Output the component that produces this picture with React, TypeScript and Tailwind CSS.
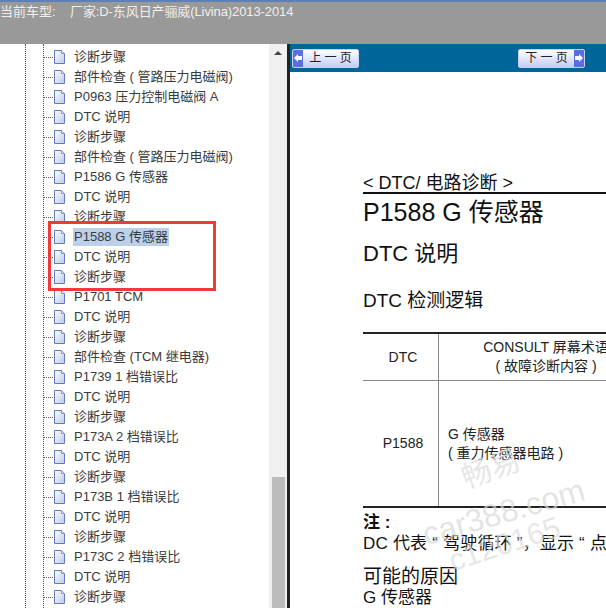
const font = "font-['Liberation_Sans','Noto_Sans_CJK_SC',sans-serif]";

const rows = [
  "",
  "诊断步骤",
  "部件检查 ( 管路压力电磁阀)",
  "P0963 压力控制电磁阀 A",
  "DTC 说明",
  "诊断步骤",
  "部件检查 ( 管路压力电磁阀)",
  "P1586 G 传感器",
  "DTC 说明",
  "诊断步骤",
  "P1588 G 传感器",
  "DTC 说明",
  "诊断步骤",
  "P1701 TCM",
  "DTC 说明",
  "诊断步骤",
  "部件检查 (TCM 继电器)",
  "P1739 1 档错误比",
  "DTC 说明",
  "诊断步骤",
  "P173A 2 档错误比",
  "DTC 说明",
  "诊断步骤",
  "P173B 1 档错误比",
  "DTC 说明",
  "诊断步骤",
  "P173C 2 档错误比",
  "DTC 说明",
  "诊断步骤",
];

const PageIcon = () => (
  <svg width="13" height="16" viewBox="0 0 13 16" className="shrink-0">
    <defs>
      <linearGradient id="pg" x1="0" y1="0" x2="1" y2="1">
        <stop offset="0" stopColor="#ffffff" />
        <stop offset="1" stopColor="#b9c9ee" />
      </linearGradient>
    </defs>
    <path d="M1.5 1.5H8.5L11.5 4.5V14.5H1.5Z" fill="url(#pg)" stroke="#6577bd" />
    <path d="M8.5 1.5V4.5H11.5" fill="#e8eefb" stroke="#8494cc" />
  </svg>
);

const NavButton = ({ label, dir }: { label: string; dir: "left" | "right" }) => {
  const arrow = (
    <div className="w-[10px] self-stretch bg-[#5a6ee0] flex items-center justify-center">
      <svg width="8" height="8" viewBox="0 0 8 8">
        <path
          d={dir === "left" ? "M0 4L4 0V2H8V6H4V8Z" : "M8 4L4 0V2H0V6H4V8Z"}
          fill="#ffffff"
        />
      </svg>
    </div>
  );
  return (
    <div className="h-[19px] w-[67px] flex items-stretch border border-[#c8d0f0] bg-gradient-to-b from-[#ffffff] to-[#c4ccf4] rounded-[2px] overflow-hidden">
      {dir === "left" && arrow}
      <div className="flex-1 text-center text-[12px] leading-[17px] text-[#222] whitespace-pre">
        {label}
      </div>
      {dir === "right" && arrow}
    </div>
  );
};

export default function App() {
  return (
    <div className={`${font} w-[606px] h-[608px] overflow-hidden bg-white flex flex-col`}>
      {/* top bar */}
      <div className="h-[44px] shrink-0 bg-[#999999]">
        <div className="h-[2px] bg-[#5f7fb8]" />
        <div className="flex text-[13px] leading-[20px] text-[#f0f0f0] whitespace-nowrap">
          <span className="w-[70px]">当前车型:</span>
          <span className="-tracking-[0.1px]">厂家:D-东风日产骊威(Livina)2013-2014</span>
        </div>
      </div>

      <div className="flex flex-1 min-h-0">
        {/* tree */}
        <div className="w-[269px] shrink-0 relative overflow-hidden">
          <div className="absolute left-[25px] top-0 bottom-0 border-l border-dotted border-[#555]" />
          <div className="absolute left-[43px] top-0 bottom-0 border-l border-dotted border-[#555]" />
          <div className="-mt-[17px] pl-[43px]">
            {rows.map((r, i) => (
              <div key={i} className="h-[20px] flex items-center">
                <div className="w-[10px] border-t border-dotted border-[#555]" />
                <PageIcon />
                <span
                  className={`ml-[7px] px-[1px] text-[13px] leading-[18px] whitespace-nowrap text-[#3a3a3a] ${
                    i === 10 ? "bg-[#bcd0ea]" : ""
                  }`}
                >
                  {r}
                </span>
              </div>
            ))}
          </div>
          {/* callout */}
          <div className="absolute left-[48px] top-[177px] w-[168px] h-[70px] border-[3px] border-[#f03a3a]" />
        </div>

        {/* scrollbar */}
        <div className="w-[18px] shrink-0 bg-[#f0f0f0] flex flex-col items-center">
          <div className="mt-[7px] w-0 h-0 border-x-[4px] border-x-transparent border-b-[4px] border-b-[#444]" />
          <div className="mt-auto w-[13px] h-[131px] bg-[#bcbcbc]" />
        </div>

        {/* doc pane */}
        <div className="flex-1 min-w-0 flex flex-col border-l-[3px] border-l-[#222] overflow-hidden">
          <div className="h-[28px] shrink-0 bg-[#006699] flex items-center pl-[2px]">
            <NavButton label="上 一 页" dir="left" />
            <div className="ml-[159px]">
              <NavButton label="下 一 页" dir="right" />
            </div>
          </div>

          <div className="relative flex-1 pl-[73px] text-[#111] whitespace-nowrap">
            <div className="pt-[102px] text-[18px] leading-[18px]">&lt; DTC/ 电路诊断 &gt;</div>
            <div className="h-[2px] bg-[#111]" />
            <div className="mt-[3px] text-[25px] leading-[30px]">P1588 G 传感器</div>
            <div className="mt-[14px] text-[22px] leading-[26px]">DTC 说明</div>
            <div className="mt-[22px] text-[19px] leading-[24px]">DTC 检测逻辑</div>

            <div className="mt-[19px] w-[290px] border-y-2 border-[#222] text-[14px] text-[#222]">
              <div className="flex h-[47px] border-b border-[#888]">
                <div className="w-[76px] shrink-0 border-r border-[#888] flex items-center justify-center pl-[5px]">
                  DTC
                </div>
                <div className="flex-1 text-center leading-[19px] pt-[4px]">
                  <div>CONSULT 屏幕术语</div>
                  <div>( 故障诊断内容 )</div>
                </div>
              </div>
              <div className="flex h-[125px]">
                <div className="w-[76px] shrink-0 border-r border-[#888] flex items-center justify-center pl-[5px]">
                  P1588
                </div>
                <div className="flex-1 pl-[9px] flex flex-col justify-center leading-[19px]">
                  <div>G 传感器</div>
                  <div>( 重力传感器电路 )</div>
                </div>
              </div>
            </div>

            <div className="mt-[5px] text-[17px] leading-[20px] font-bold">注 :</div>
            <div className="text-[17px] leading-[20px] mt-[1px] tracking-[0.2px]">
              {"DC 代表 “ 驾驶循环 ”\uFF0C显示 “ 点"}
            </div>
            <div className="mt-[11px] text-[19px] leading-[24px]">可能的原因</div>
            <div className="text-[17px] leading-[20px] -mt-[1px]">G 传感器</div>

            {/* watermark */}
            <div className="absolute left-[171px] top-[381px] text-[30px] leading-[32px] text-[#dcdcdc]/70 -rotate-[20deg]">
              畅易
            </div>
            <div className="absolute left-[130px] top-[421px] text-[32px] leading-[38px] text-[#d8d8d8]/70 -rotate-[16deg]">
              car388.com
            </div>
            <div className="absolute left-[157px] top-[456px] text-[30px] leading-[32px] text-[#dcdcdc]/70 -rotate-[18deg]">
              c120165
            </div>
          </div>
        </div>
      </div>
    </div>
  );
}
